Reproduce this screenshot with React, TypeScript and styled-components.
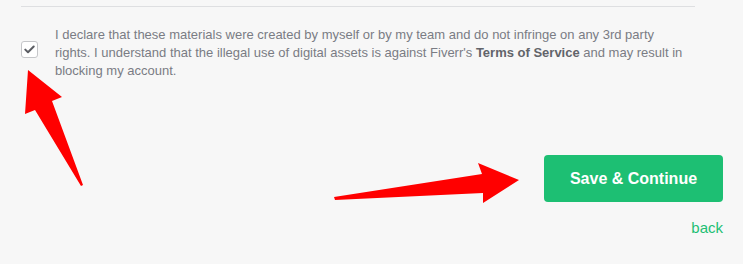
import React from "react";
import styled, { createGlobalStyle } from "styled-components";

const Global = createGlobalStyle`
  html, body { margin: 0; padding: 0; background: #f7f7f7; }
  body { font-family: "Liberation Sans", Arial, sans-serif; }
`;

const Page = styled.div`
  position: relative;
  width: 743px;
  height: 264px;
  box-sizing: border-box;
  padding: 6px 20px 0 21px;
  overflow: hidden;
`;

const Divider = styled.hr`
  margin: 0;
  width: 674px;
  border: 0;
  border-top: 1px solid #dedfe1;
`;

const Agreement = styled.label`
  display: flex;
  align-items: flex-start;
  gap: 17px;
  margin-top: 19px;
`;

const Box = styled.span`
  flex: none;
  width: 15px;
  height: 15px;
  margin-top: 15px;
  border: 1px solid #c5c6c9;
  border-radius: 3px;
  background: #fff;
  display: flex;
  align-items: center;
  justify-content: center;
`;

const Statement = styled.p`
  margin: 0;
  width: 630px;
  font-size: 13px;
  line-height: 18px;
  color: #7a7c84;
`;

const Strong = styled.b`
  color: #62646a;
  font-weight: 700;
`;

const Actions = styled.div`
  display: flex;
  flex-direction: column;
  align-items: flex-end;
  margin-top: 75px;
`;

const Primary = styled.button`
  width: 179px;
  height: 47px;
  border: 0;
  border-radius: 4px;
  background: #1dbf73;
  color: #fff;
  font-family: "Liberation Sans", Arial, sans-serif;
  font-weight: 700;
  font-size: 16px;
  cursor: pointer;
`;

const Back = styled.a`
  margin-top: 17px;
  font-size: 15px;
  color: #1dbf73;
  text-decoration: none;
  line-height: 18px;
`;

const Overlay = styled.svg`
  position: absolute;
  left: 0;
  top: 0;
  pointer-events: none;
`;

export default function App() {
  return (
    <>
      <Global />
      <Page>
        <Divider />
        <Agreement>
          <Box>
            <svg width="11" height="9" viewBox="0 0 11 9">
              <path d="M1.3 4.6 L4 7.2 L9.7 1.5" fill="none" stroke="#5b5d63" strokeWidth="2" strokeLinecap="round" strokeLinejoin="round" />
            </svg>
          </Box>
          <Statement>
            I declare that these materials were created by myself or by my team and do not infringe on any 3rd party
            rights. I understand that the illegal use of digital assets is against Fiverr's <Strong>Terms of Service</Strong> and may result in
            blocking my account.
          </Statement>
        </Agreement>
        <Actions>
          <Primary type="button">Save &amp; Continue</Primary>
          <Back href="#">back</Back>
        </Actions>
        <Overlay width="743" height="264" viewBox="0 0 743 264">
          <polygon
            points="28,70 62,97 52,101 83,185 81,186 35,110 25,114"
            fill="#ff0000"
            strokeLinejoin="round"
          />
          <polygon
            points="334,197 482,174 478,163 519,180 483,203 483,193 335,200"
            fill="#ff0000"
          />
        </Overlay>
      </Page>
    </>
  );
}
